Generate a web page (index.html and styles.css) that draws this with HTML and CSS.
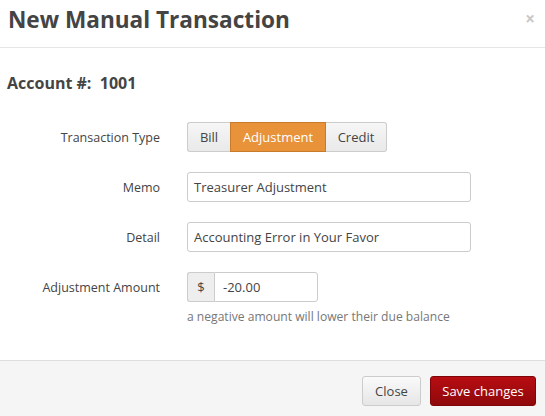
FILE: index.html
```html
<!DOCTYPE html>
<html>
<head>
<meta charset="utf-8">
<link rel="stylesheet" href="styles.css">
</head>
<body>
<div class="modal">
  <div class="modal-header">
    <h3 class="title">New Manual Transaction</h3>
    <span class="close">×</span>
  </div>
  <div class="modal-body">
    <h4 class="account">Account #:&nbsp; 1001</h4>
    <div class="form">
      <div class="row">
        <label class="label">Transaction Type</label>
        <div class="controls">
          <div class="btn-group">
            <span class="btn">Bill</span>
            <span class="btn active">Adjustment</span>
            <span class="btn">Credit</span>
          </div>
        </div>
      </div>
      <div class="row">
        <label class="label">Memo</label>
        <div class="controls">
          <div class="input wide">Treasurer Adjustment</div>
        </div>
      </div>
      <div class="row">
        <label class="label">Detail</label>
        <div class="controls">
          <div class="input wide">Accounting Error in Your Favor</div>
        </div>
      </div>
      <div class="row amount-row">
        <label class="label">Adjustment Amount</label>
        <div class="controls">
          <div class="input-prepend">
            <span class="addon">$</span>
            <div class="input amount">-20.00</div>
          </div>
        </div>
      </div>
      <div class="help">a negative amount will lower their due balance</div>
    </div>
  </div>
  <div class="modal-footer">
    <span class="fbtn">Close</span>
    <span class="fbtn primary">Save changes</span>
  </div>
</div>
</body>
</html>
```
FILE: styles.css
```css
* { box-sizing: border-box; }
html, body { margin: 0; padding: 0; background: #fff; }
body {
  font-family: "Open Sans", "DejaVu Sans", sans-serif;
  font-size: 13px;
  color: #333;
  width: 545px;
  height: 416px;
  overflow: hidden;
}
.modal { display: flex; flex-direction: column; height: 416px; }
.modal-header {
  height: 48px;
  border-bottom: 1px solid #e5e5e5;
  display: flex;
  align-items: flex-start;
  justify-content: space-between;
  padding: 0 10px 0 8px;
}
.title {
  margin: 0;
  font-size: 22.6px;
  font-weight: 700;
  color: #444;
  line-height: 40px;
}
.close {
  font-size: 17px;
  font-weight: 700;
  color: #c8c8c8;
  line-height: 38px;
}
.modal-body { flex: 1; padding: 0; }
.account {
  margin: 24px 0 0 7px;
  font-size: 16px;
  font-weight: 700;
  color: #444;
  line-height: 22px;
}
.form { margin-top: 28px; }
.row { display: flex; align-items: center; height: 30px; margin-bottom: 20px; }
.amount-row { margin-bottom: 5px; }
.label {
  width: 160px;
  text-align: right;
  color: #444;
  font-size: 12.5px;
}
.controls { margin-left: 27px; }
.btn-group { display: flex; height: 30px; }
.btn {
  display: flex; align-items: center; justify-content: center;
  height: 30px;
  border: 1px solid #ccc;
  background: linear-gradient(#f6f6f6, #e9e9e9);
  color: #444;
  padding: 0 11px;
}
.btn:first-child { border-radius: 3px 0 0 3px; border-right: 0; width: 43px; }
.btn:last-child { border-radius: 0 3px 3px 0; border-left: 0; width: 61px; }
.btn.active {
  background: #e8923a;
  border-color: #c97b2c;
  color: #fff;
  width: 96px;
}
.input {
  height: 30px;
  border: 1px solid #ccc;
  border-radius: 3px;
  padding: 0 6px;
  display: flex; align-items: center;
  color: #444;
  background: #fff;
}
.wide { width: 284px; }
.input-prepend { display: flex; }
.addon {
  width: 27px; height: 30px;
  display: flex; align-items: center; justify-content: center;
  background: #eee;
  border: 1px solid #ccc;
  border-right: 0;
  border-radius: 3px 0 0 3px;
  color: #444;
}
.amount { width: 104px; border-radius: 0 3px 3px 0; padding-left: 8px; }
.help { margin-left: 187px; color: #777; line-height: 20px; font-size: 12.1px; }
.modal-footer {
  height: 56px;
  border-top: 1px solid #ddd;
  background: #f5f5f5;
  display: flex;
  justify-content: flex-end;
  align-items: flex-start;
  padding: 15px 9px 0 0;
  gap: 9px;
}
.fbtn {
  height: 30px;
  display: flex; align-items: center; justify-content: center;
  border: 1px solid #ccc;
  border-radius: 3px;
  background: linear-gradient(#fafafa, #e6e6e6);
  color: #444;
  width: 59px;
}
.fbtn.primary {
  width: 106px;
  background: linear-gradient(#b70d12, #8f080b);
  border-color: #800508;
  color: #fff;
}
```
